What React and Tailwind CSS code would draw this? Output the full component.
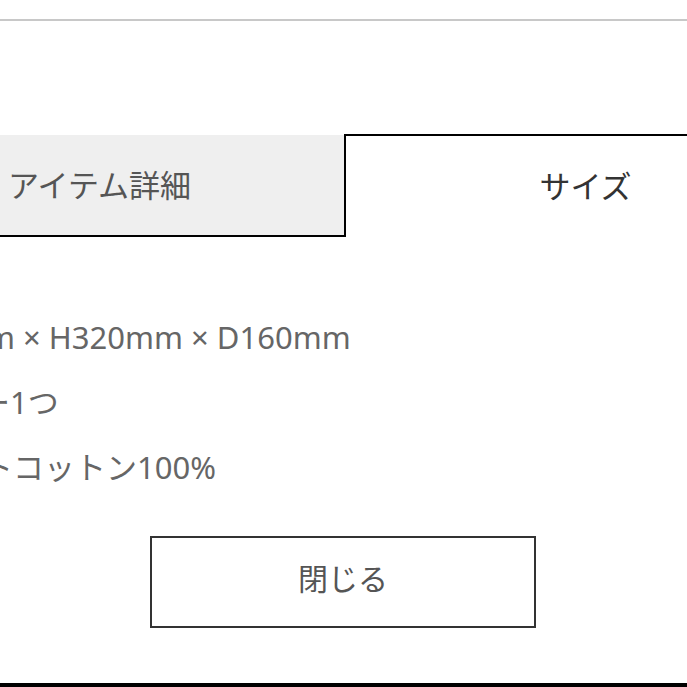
const font = { fontFamily: '"Noto Sans", "Noto Sans CJK JP", sans-serif' };

function Tab({ label, active }) {
  return (
    <div
      className={
        active
          ? "flex-1 flex items-center justify-center bg-white border-t-2 border-l-2 border-black text-[#333]"
          : "flex-1 flex items-center justify-center bg-[#efefef] border-b-2 border-black mt-[1px] text-[#555]"
      }
    >
      <span className={active ? "text-[31px] leading-none" : "text-[31px] leading-none pr-[10px]"}>{label}</span>
    </div>
  );
}

const specs = [
  { text: "W440mm × H320mm × D160mm", cls: "ml-[10px]" },
  { text: "ファスナー1つ", cls: "-ml-[10px]" },
  { text: "ソフトコットン100%", cls: "ml-[55px]" },
];

export default function App() {
  return (
    <div className="w-[687px] h-[687px] overflow-hidden bg-white flex flex-col" style={font}>
      <div className="h-[19px] shrink-0" />
      <div className="h-[2px] bg-[#c8c8c8] shrink-0" />
      <div className="flex-1 flex flex-col -ml-[135px] w-[960px]">
        <div className="h-[113px] shrink-0" />
        <div className="flex h-[103px] shrink-0">
          <Tab label="アイテム詳細" />
          <Tab label="サイズ" active />
        </div>
        <div className="pt-[80px] flex flex-col gap-[25px] text-[31px] leading-[40px] text-[#666] whitespace-nowrap">
          {specs.map((s) => (
            <div key={s.text} className={s.cls}>
              {s.text}
            </div>
          ))}
        </div>
        <div className="flex justify-center mt-[49px] mr-[4px]">
          <button className="w-[386px] h-[92px] border-2 border-[#333] bg-white text-[30px] leading-none pb-[6px] text-[#555]">
            閉じる
          </button>
        </div>
      </div>
      <div className="h-[4px] bg-black shrink-0" />
    </div>
  );
}
